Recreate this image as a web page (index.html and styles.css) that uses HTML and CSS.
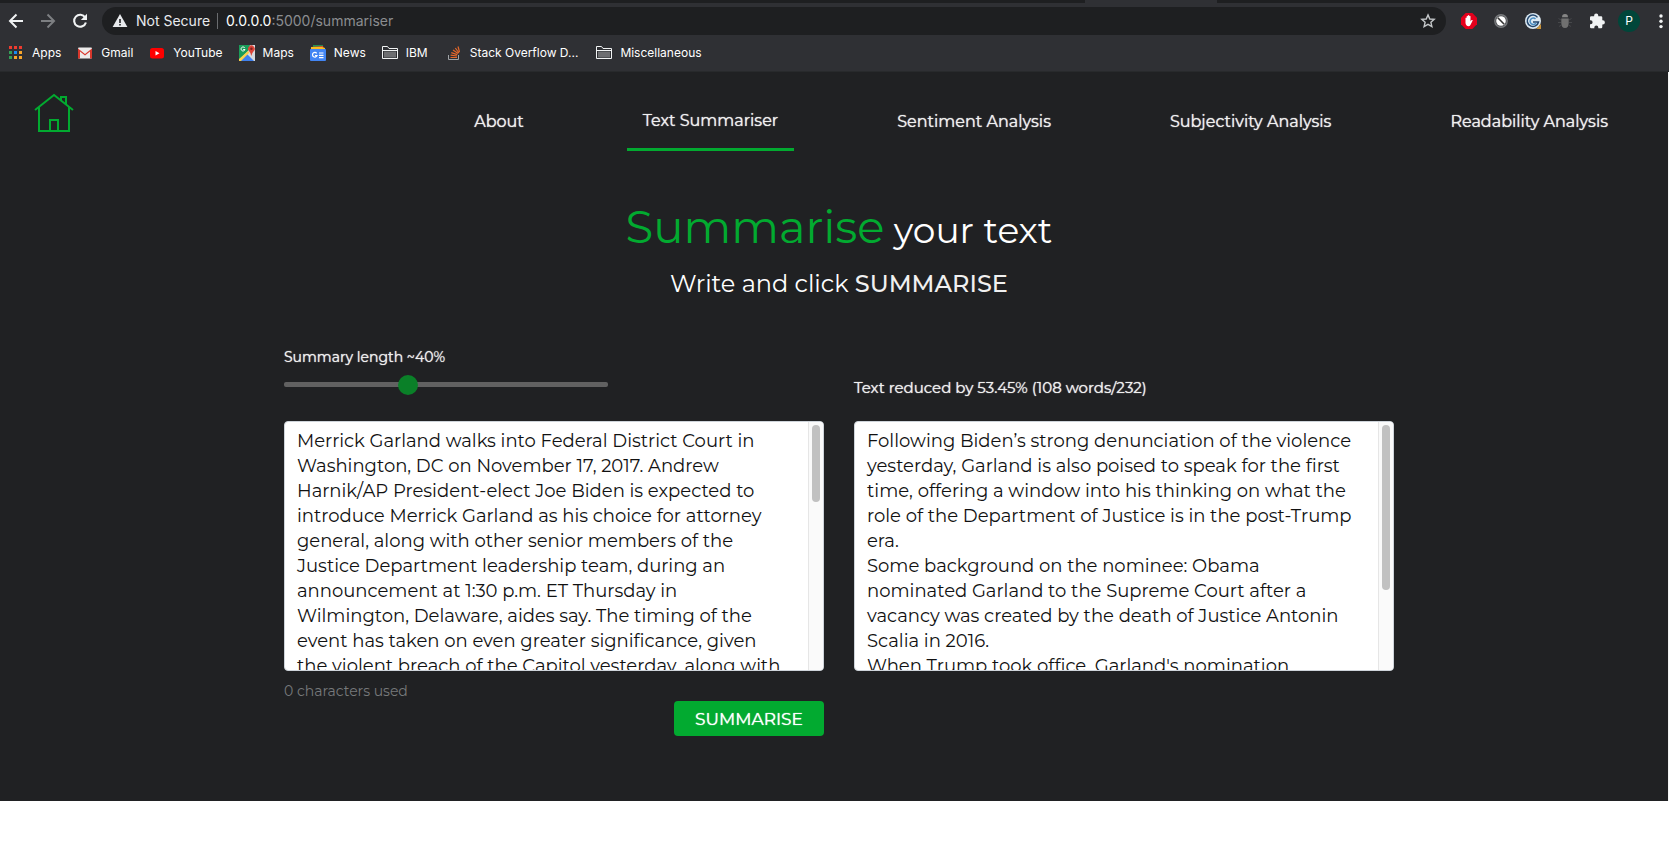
FILE: index.html
```html
<!DOCTYPE html>
<html lang="en">
<head>
<meta charset="utf-8">
<title>Text Summariser</title>
<link rel="stylesheet" href="styles.css">
</head>
<body>
<header class="browser">
  <div class="tabstrip"><span class="tab"></span></div>
  <div class="toolbar">
    <button class="tool" aria-label="Back"><svg width="16" height="16" viewBox="0 0 16 16" fill="none" stroke="#f1f3f4" stroke-width="2"><path d="M15 8H2M8.500 1.500 2 8l6.500 6.500"/></svg></button>
    <button class="tool" aria-label="Forward"><svg width="16" height="16" viewBox="0 0 16 16" fill="none" stroke="#7d7f82" stroke-width="2"><path d="M1 8h13M7.500 1.500 14 8l-6.500 6.500"/></svg></button>
    <button class="tool" aria-label="Reload"><svg width="16" height="16" viewBox="0 0 16 16"><path d="M13.200 4.500A6 6 0 1 0 13.900 9.500" fill="none" stroke="#f1f3f4" stroke-width="2.100"/><path d="M15 .8V7H8.800z" fill="#f1f3f4"/></svg></button>
    <div class="omnibox">
      <svg width="16" height="16" viewBox="0 0 16 16"><path d="M8 1 .6 14h14.800z" fill="#e8eaed"/><path d="M7.200 6h1.600v4H7.200zM7.200 11h1.600v1.600H7.200z" fill="#202124"/></svg>
      <span class="secure">Not Secure</span>
      <span class="url"><b>0.0.0.0</b>:5000/summariser</span>
      <button class="star" aria-label="Bookmark this page"><svg width="16" height="16" viewBox="0 0 16 16" fill="none" stroke="#c4c7c9" stroke-width="1.400"><path d="M8 1.900 9.800 6l4.400.4-3.300 2.900 1 4.300L8 11.300l-3.900 2.300 1-4.300L1.800 6.400 6.200 6z"/></svg></button>
    </div>
    <button class="tool" aria-label="Ad blocker"><svg width="16" height="16" viewBox="0 0 16 16"><path d="M4.700 0h6.600L16 4.700v6.600L11.300 16H4.700L0 11.300V4.700z" fill="#e5001c"/><path d="M4.500 8V5q.7-1 1.200 0V3.200q.6-.9 1.200 0v-.8q.7-1 1.300 0v.8q.7-.9 1.300 0v5.200l1-1.300q.8-.5 1.300.2l-2.100 4.200Q9 13.500 7.500 13.300 4.800 13 4.500 10z" fill="#fff"/></svg></button>
    <button class="tool" aria-label="Blocker"><svg width="16" height="16" viewBox="0 0 16 16"><circle cx="8" cy="8" r="6.900" fill="#77797c"/><circle cx="8" cy="8" r="5.600" fill="#48494c"/><circle cx="8" cy="8" r="4.800" fill="#fff"/><path d="m4.800 4.800 6.400 6.400" stroke="#333" stroke-width="1.600"/></svg></button>
    <button class="tool" aria-label="Grammar"><svg width="16" height="16" viewBox="0 0 16 16"><circle cx="8" cy="8" r="8" fill="#dce9f2"/><path d="M12.500 4.400A5.700 5.700 0 1 0 13.500 9H8" fill="none" stroke="#24476d" stroke-width="1.500"/><path d="M10.500 6A3.200 3.200 0 1 0 11 10" fill="none" stroke="#4b8fc4" stroke-width="1.500"/><path d="M16 11v5h-5z" fill="#c8923b"/></svg></button>
    <button class="tool" aria-label="Debugger"><svg width="16" height="16" viewBox="0 0 16 16"><path d="M5 4.300Q5 1 8 1t3 3.300z" fill="#858585"/><path d="M4.300 5.500h7.400V10q0 5-3.700 5t-3.700-5z" fill="#707070"/><path d="M1.500 5.500 4 7M1 9.500h3M2 13.500 4.500 12M14.500 5.500 12 7M15 9.500h-3M14 13.500 11.500 12" stroke="#47484b"/></svg></button>
    <button class="tool" aria-label="Extensions"><svg width="16" height="16" viewBox="0 0 16 16"><path d="M1 4.500q0-1.200 1.200-1.200h2.900V2.700a2.100 2.100 0 0 1 4.200 0v.6h2.800q1.200 0 1.200 1.200v2.800h.5a2.100 2.100 0 0 1 0 4.200h-.5V14q0 1.200-1.200 1.200H9.300v-.7a2 2 0 0 0-4 0v.7H2.200Q1 15.200 1 14v-2.800h.6a2 2 0 0 0 0-4H1z" fill="#f1f3f4"/></svg></button>
    <button class="avatar" aria-label="Profile">P</button>
    <button class="tool" aria-label="Menu"><svg width="16" height="16" viewBox="0 0 16 16" fill="#f1f3f4"><circle cx="8" cy="3" r="1.700"/><circle cx="8" cy="8.300" r="1.700"/><circle cx="8" cy="13.600" r="1.700"/></svg></button>
  </div>
  <nav class="bookmarks" aria-label="Bookmarks">
    <a href="#"><svg width="16" height="16" viewBox="0 0 16 16"><path d="M1 1h3v3H1zM6 1h3v3H6zM11 1h3v3h-3z" fill="#ee3b2f"/><path d="M1 6h3v3H1zM1 11h3v3H1z" fill="#34a058"/><path d="M6 6h3v3H6z" fill="#1a8cf0"/><path d="M11 6h3v3h-3zM6 11h3v3H6zM11 11h3v3h-3z" fill="#f8a62b"/></svg>Apps</a>
    <a href="#"><svg width="16" height="16" viewBox="0 0 16 16"><rect x="1" y="2.500" width="14" height="11" rx="1" fill="#eceaea"/><path d="M1 13.500v-10L8 9l7-5.500v10h-2V6.500L8 10.500l-5-4v7z" fill="#d9372c"/></svg>Gmail</a>
    <a href="#"><svg width="16" height="16" viewBox="0 0 16 16"><rect x="1" y="3" width="14" height="10.500" rx="2.500" fill="#f00"/><path d="m6.500 6 4 2.200-4 2.300z" fill="#fff"/></svg>YouTube</a>
    <a href="#"><svg width="16" height="16" viewBox="0 0 16 16"><path d="M0 0h16v16H0z" fill="#d7dade"/><path d="M0 0h11L9 6l-9 9z" fill="#1a9c59"/><path d="m0 16 8-7 7 7z" fill="#3f80ee"/><path d="M0 14 9 6l1.500 1.500L2 16H0z" fill="#fcd14b"/><path d="M12.300 11Q12 8 10 6a3.300 3.300 0 1 1 4.800 0q-2 2-2.500 5z" fill="#dc4438"/><circle cx="12.400" cy="3.700" r="1.200" fill="#7e2320"/><path d="M5.800 3A2 2 0 1 0 6 4.500H4.200" fill="none" stroke="#fff"/></svg>Maps</a>
    <a href="#"><svg width="16" height="16" viewBox="0 0 16 16"><path d="M3 0h10v4H3z" fill="#23914e"/><path d="m1 2 12-1 1 4H1z" fill="#e8452f"/><path d="M1 2h11l3 1v3H1z" fill="#fbbc1f"/><rect y="4" width="16" height="12" rx="1" fill="#4285f4"/><path d="M6.700 8.400A2.300 2.300 0 1 0 7 10.500H5M9 8h4.500M9 10.300h4.500M9 12.600h4.500" fill="none" stroke="#fff" stroke-width="1.200"/></svg>News</a>
    <a href="#"><svg width="16" height="16" viewBox="0 0 16 16"><path d="M.5 13.500v-12h5l1.500 2h8.500v10z" fill="none" stroke="#f1f3f4"/><path d="M2 6.500h12v6H2z" fill="#6d6e71"/><path d="M1 5.500h14" stroke="#f1f3f4"/></svg>IBM</a>
    <a class="wide" href="#"><svg width="16" height="16" viewBox="0 0 16 16" fill="none"><path d="M2.500 10v4.500h10V10" stroke="#a0a3a6"/><path d="M4.500 12.500h6.500M4.600 10.200l6.400.8M5.300 7.600l6 2M7 5l5.200 3.600M9.300 3l3.700 5M12 1.500l1.500 5.500" stroke="#e5672a" stroke-width="1.200"/></svg>Stack Overflow D...</a>
    <a class="wide" href="#"><svg width="16" height="16" viewBox="0 0 16 16"><path d="M.5 13.500v-12h5l1.500 2h8.500v10z" fill="none" stroke="#f1f3f4"/><path d="M2 6.500h12v6H2z" fill="#6d6e71"/><path d="M1 5.500h14" stroke="#f1f3f4"/></svg>Miscellaneous</a>
  </nav>
</header>

<div class="page">
  <div class="site-head">
    <a href="#" aria-label="Home"><svg class="home" width="40" height="40" viewBox="0 0 40 40" fill="none" stroke="#02aa30" stroke-width="2"><path d="M1 17 20 2l19 15M5 14v24h30V14M27 7V4h5v7M16 38V27h8v11"/></svg></a>
    <nav class="site-nav">
      <a href="#">About</a>
      <a class="active" href="#">Text Summariser</a>
      <a href="#">Sentiment Analysis</a>
      <a href="#">Subjectivity Analysis</a>
      <a href="#">Readability Analysis</a>
    </nav>
  </div>

  <main class="content">
    <h1><span>Summarise</span> your text</h1>
    <p class="lead">Write and click <strong>SUMMARISE</strong></p>
    <form class="columns">
      <section class="column">
        <div class="controls">
          <label for="length">Summary length ~40%</label>
          <input id="length" type="range" min="10" max="90" value="40">
        </div>
        <div class="box">
          <textarea aria-label="Your text">Merrick Garland walks into Federal District Court in Washington, DC on November 17, 2017. Andrew Harnik/AP President-elect Joe Biden is expected to introduce Merrick Garland as his choice for attorney general, along with other senior members of the Justice Department leadership team, during an announcement at 1:30 p.m. ET Thursday in Wilmington, Delaware, aides say. The timing of the event has taken on even greater significance, given the violent breach of the Capitol yesterday, along with</textarea>
          <div class="scroll"><div class="thumb" style="height:32%"></div></div>
        </div>
        <p class="count">0 characters used</p>
        <button class="submit" type="button">SUMMARISE</button>
      </section>
      <section class="column">
        <div class="controls"><label class="result" for="summary">Text reduced by 53.45% (108 words/232)</label></div>
        <div class="box">
          <textarea id="summary" readonly>Following Biden’s strong denunciation of the violence yesterday, Garland is also poised to speak for the first time, offering a window into his thinking on what the role of the Department of Justice is in the post-Trump era.
Some background on the nominee: Obama nominated Garland to the Supreme Court after a vacancy was created by the death of Justice Antonin Scalia in 2016.
When Trump took office, Garland's nomination</textarea>
          <div class="scroll"><div class="thumb" style="height:68%"></div></div>
        </div>
      </section>
    </form>
  </main>
</div>
</body>
</html>
```
FILE: styles.css
```css
* { box-sizing: border-box; }
body { margin: 0; background: #fff; font-family: Montserrat, Inter, "Liberation Sans", sans-serif; }
a { color: inherit; text-decoration: none; }
button { font: inherit; color: inherit; background: none; border: 0; padding: 0; cursor: pointer; }
svg { display: block; flex: none; }

.browser { background: #2f3034; color: #fff; font: 12px/16px Inter, "Liberation Sans", sans-serif; border-bottom: 1px solid #282a2c; }
.tabstrip { height: 3px; background: #1e1f21; padding-left: 65%; }
.tab { display: block; width: 132px; height: 3px; background: #2f3034; }
.toolbar { display: flex; align-items: center; gap: 16px; height: 36px; padding-left: 8px; overflow: hidden; }
.tool { flex: none; width: 16px; }
.omnibox { flex: 1; display: flex; align-items: center; height: 28px; margin: 0 -1px 0 -2px; padding: 0 10px; border-radius: 14px; background: #1e1f21; font-size: 14px; }
.secure { margin-left: 8px; padding-right: 7px; border-right: 1px solid #6a6c6f; color: #e8eaed; }
.url { flex: 1; margin-left: 8px; color: #8b8d90; }
.url b { font-weight: 400; color: #fff; }
.avatar { flex: none; width: 22px; height: 22px; margin: 0 -3px; border-radius: 50%; background: #00463a; }
.bookmarks { display: flex; align-items: center; height: 32px; padding: 0 8px 4px; gap: 16px; }
.bookmarks a { display: flex; align-items: center; gap: 8px; white-space: nowrap; }
.bookmarks .wide { margin-left: 2px; }

.page { background: #202123; color: #fff; border-right: 1px solid #f5f5f5; padding-bottom: 65px; }
.site-head { display: flex; justify-content: space-between; align-items: flex-start; padding: 21px 44px 0 34px; }
.site-nav { display: flex; gap: 87px; font-size: 16px; line-height: 24px; color: #f0f0f0; text-shadow: 0 0 1px #f0f0f0; }
.site-nav a { padding: 17px 16px 15px; white-space: nowrap; }
.site-nav .active { padding-top: 16px; border-bottom: 3px solid #02aa30; }

.content { max-width: 1120px; margin: 0 auto; padding-left: 10px; }
h1 { margin: 46px 0 0; font-size: 36px; line-height: 60px; font-weight: 400; text-align: center; }
h1 span { font-size: 45px; color: #02aa30; }
.lead { margin: 6px 0 0; font-size: 24px; line-height: 36px; text-align: center; }
.lead strong { font-weight: 500; color: #f0f0f0; }
.columns { display: flex; gap: 30px; margin-top: 45px; }
.column { flex: 1; min-width: 0; display: flex; flex-direction: column; }
.controls { display: flex; flex-direction: column; height: 74px; font-size: 14px; line-height: 20px; color: #f0f0f0; text-shadow: 0 0 1px #f0f0f0; }
.result { margin-top: 31px; font-size: 15px; }
input[type=range] { appearance: none; width: 60%; height: 5px; margin: 15px 0 0; border-radius: 2px; background: #616161; }
input[type=range]::-webkit-slider-thumb { appearance: none; width: 20px; height: 20px; border-radius: 50%; background: #0a8028; }
.box { position: relative; height: 250px; }
textarea { display: block; width: 100%; height: 100%; resize: none; overflow: hidden; padding: 7px 36px 0 12px; border: 1px solid #ced4da; border-radius: 4px; background: #fff; color: #111; font: 18px/25px Montserrat, Inter, "Liberation Sans", sans-serif; }
.scroll { position: absolute; top: 1px; right: 1px; bottom: 1px; width: 15px; padding: 3px; border-left: 1px solid #e6e6e6; border-radius: 0 3px 3px 0; background: #fafafa; }
.thumb { width: 8px; border-radius: 4px; background: #c1c1c1; }
.count { margin: 10px 0 0; font-size: 14px; line-height: 20px; color: #77797b; }
.submit { align-self: flex-end; width: 150px; height: 35px; border-radius: 4px; background: #02aa30; color: #fff; font-size: 17px; text-shadow: 0 0 1px #fff; }
```
